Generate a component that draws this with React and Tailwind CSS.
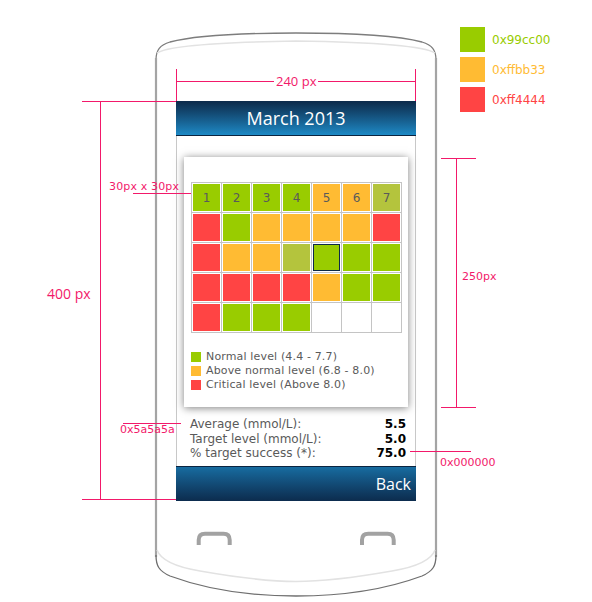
const GREEN = 'bg-[#99cc00]'
const ORANGE = 'bg-[#ffbb33]'
const RED = 'bg-[#ff4444]'
const OLIVE = 'bg-[#b4c43d]'
const EMPTY = 'bg-white'

// calendar days, row by row (g = normal, o = above normal, r = critical, y = partial, e = empty)
const rows = [
  ['g', 'g', 'g', 'g', 'o', 'o', 'y'],
  ['r', 'g', 'o', 'o', 'o', 'o', 'r'],
  ['r', 'o', 'o', 'y', 'g', 'g', 'g'],
  ['r', 'r', 'r', 'r', 'o', 'g', 'g'],
  ['r', 'g', 'g', 'g', 'e', 'e', 'e'],
]

const fills = { g: GREEN, o: ORANGE, r: RED, y: OLIVE, e: EMPTY }

function Calendar() {
  return (
    <div className="inline-grid grid-cols-7 border-l border-t border-[#c4c4c4]">
      {rows.map((row, r) =>
        row.map((c, i) => {
          const selected = r === 2 && i === 4
          return (
            <div key={`${r}-${i}`} className="w-[30px] h-[30px] p-px bg-white border-r border-b border-[#c4c4c4]">
              <div
                className={`w-full h-full flex items-center justify-center text-[12px] text-[#5a5a5a] ${fills[c]} ${
                  selected ? 'border border-[#0e2a47]' : ''
                }`}
              >
                {r === 0 ? i + 1 : ''}
              </div>
            </div>
          )
        })
      )}
    </div>
  )
}

function Legend() {
  const items = [
    [GREEN, 'Normal level (4.4 - 7.7)'],
    [ORANGE, 'Above normal level (6.8 - 8.0)'],
    [RED, 'Critical level (Above 8.0)'],
  ]
  return (
    <div className="mt-[17px] flex flex-col">
      {items.map(([color, label]) => (
        <div key={label} className="h-[14px] flex items-center">
          <span className={`w-[10px] h-[10px] ${color}`} />
          <span className="ml-[5px] text-[11px] tracking-[0.15px] text-[#5a5a5a]">{label}</span>
        </div>
      ))}
    </div>
  )
}

function Stats() {
  const stats = [
    ['Average (mmol/L):', '5.5'],
    ['Target level (mmol/L):', '5.0'],
    ['% target success (*):', '75.0'],
  ]
  return (
    <div className="mt-[10px] pl-[13px] pr-[9px] flex flex-col text-[12px] leading-[14.5px]">
      {stats.map(([label, value]) => (
        <div key={label} className="flex justify-between">
          <span className="text-[#5a5a5a]">{label}</span>
          <span className="font-bold text-black">{value}</span>
        </div>
      ))}
    </div>
  )
}

function Screen() {
  return (
    <div className="absolute left-[176px] top-[101px] w-[240px] h-[400px] flex flex-col">
      <div className="h-[35px] shrink-0 bg-linear-to-b from-[#0c2a4a] to-[#1d8ac6] border-b border-[#0b2440] flex items-center justify-center text-white text-[18px] font-['Open_Sans',sans-serif]">
        March 2013
      </div>
      <div className="flex-1 bg-white border-x border-[#c8c8c8]">
        <div className="ml-[7px] mt-[21px] w-[224px] h-[250px] bg-white shadow-[0_1px_8px_rgba(0,0,0,0.5)] pt-[25px] pl-[7px]">
          <Calendar />
          <Legend />
        </div>
        <Stats />
      </div>
      <div className="h-[35px] shrink-0 bg-linear-to-b from-[#176ca0] to-[#0c2c4e] border-t border-[#0b2440] flex items-center justify-end pr-[5px] text-white text-[16px] font-['Open_Sans',sans-serif]">
        Back
      </div>
    </div>
  )
}

function Drawing() {
  const pink = '#f2196a'
  return (
    <svg className="absolute inset-0 pointer-events-none" width="592" height="602" viewBox="0 0 592 602">
      {/* phone body */}
      <path d="M156,60 C156,50 160,45 170,42 C200,34 250,33 296,33 C342,33 392,34 422,42 C432,45 436,50 436,60" fill="none" stroke="#7d7d7d" strokeWidth="1.3" />
      <path d="M157,53 C166,47 200,42.5 296,41 C392,42.5 426,47 435,53" fill="none" stroke="#e2e2e2" strokeWidth="1.5" />
      <line x1="156" y1="58" x2="156" y2="557" stroke="#a4a4a4" strokeWidth="2.2" />
      <line x1="436" y1="58" x2="436" y2="557" stroke="#a4a4a4" strokeWidth="2.2" />
      <path d="M156,555 C156,566 159,571 170,576 C205,589 250,596 296,596 C342,596 387,589 422,576 C433,571 436,566 436,555" fill="none" stroke="#6f6f6f" strokeWidth="1.3" />
      <path d="M157,550 C161,561 176,567 200,571 C240,578 270,581.5 296,581.5 C322,581.5 352,578 392,571 C416,567 431,561 435,550" fill="none" stroke="#e2e2e2" strokeWidth="1.5" />
      <path d="M198.7,545 V540 Q198.7,533.7 205,533.7 H223.5 Q229.7,533.7 229.7,540 V545" fill="none" stroke="#a2a2a2" strokeWidth="4" />
      <path d="M362,545 V540 Q362,533.7 368.3,533.7 H387.5 Q393.7,533.7 393.7,540 V545" fill="none" stroke="#a2a2a2" strokeWidth="4" />

      {/* dimension lines */}
      <g stroke={pink} strokeWidth="1" fill="none">
        <line x1="176.5" y1="69" x2="176.5" y2="101" />
        <line x1="415.5" y1="69" x2="415.5" y2="101" />
        <line x1="176" y1="81.5" x2="416" y2="81.5" />
        <line x1="82" y1="101.5" x2="176" y2="101.5" />
        <line x1="82" y1="499.5" x2="176" y2="499.5" />
        <line x1="100.5" y1="101" x2="100.5" y2="500" />
        <line x1="133" y1="193.5" x2="191" y2="193.5" />
        <line x1="123" y1="423.5" x2="181" y2="423.5" />
        <line x1="410" y1="451.5" x2="471" y2="451.5" />
        <line x1="456.5" y1="158" x2="456.5" y2="408" />
        <line x1="441" y1="158.5" x2="476" y2="158.5" />
        <line x1="441" y1="407.5" x2="476" y2="407.5" />
      </g>
    </svg>
  )
}

function Swatches() {
  const items = [
    ['bg-[#99cc00]', 'text-[#99cc00]', '0x99cc00'],
    ['bg-[#ffbb33]', 'text-[#ffbb33]', '0xffbb33'],
    ['bg-[#ff4444]', 'text-[#ff4444]', '0xff4444'],
  ]
  return (
    <div className="absolute left-[460px] top-[27px] flex flex-col gap-[5px]">
      {items.map(([bg, fg, label]) => (
        <div key={label} className="flex items-center">
          <span className={`w-[25px] h-[25px] ${bg}`} />
          <span className={`ml-[7px] text-[12px] ${fg}`}>{label}</span>
        </div>
      ))}
    </div>
  )
}

export default function App() {
  return (
    <div className="relative w-[592px] h-[602px] bg-white overflow-hidden font-['DejaVu_Sans',sans-serif]">
      <Screen />
      <Drawing />

      {/* annotation labels */}
      <span className="absolute left-[274px] top-[73px] px-[2px] bg-white leading-[17px] text-[13px] text-[#f2196a] font-['Open_Sans',sans-serif]">
        240 px
      </span>
      <span className="absolute left-[47px] top-[285px] leading-[18px] text-[14px] text-[#f2196a] font-['Open_Sans',sans-serif]">
        400 px
      </span>
      <span className="absolute left-[109px] top-[180px] leading-[13px] text-[11px] tracking-[0.15px] text-[#f2196a]">
        30px x 30px
      </span>
      <span className="absolute left-[120px] top-[423px] leading-[13px] text-[11px] text-[#f2196a]">0x5a5a5a</span>
      <span className="absolute left-[440px] top-[456px] leading-[13px] text-[11px] text-[#f2196a]">0x000000</span>
      <span className="absolute left-[462px] top-[270px] leading-[13px] text-[11px] text-[#f2196a]">250px</span>

      <Swatches />
    </div>
  )
}
